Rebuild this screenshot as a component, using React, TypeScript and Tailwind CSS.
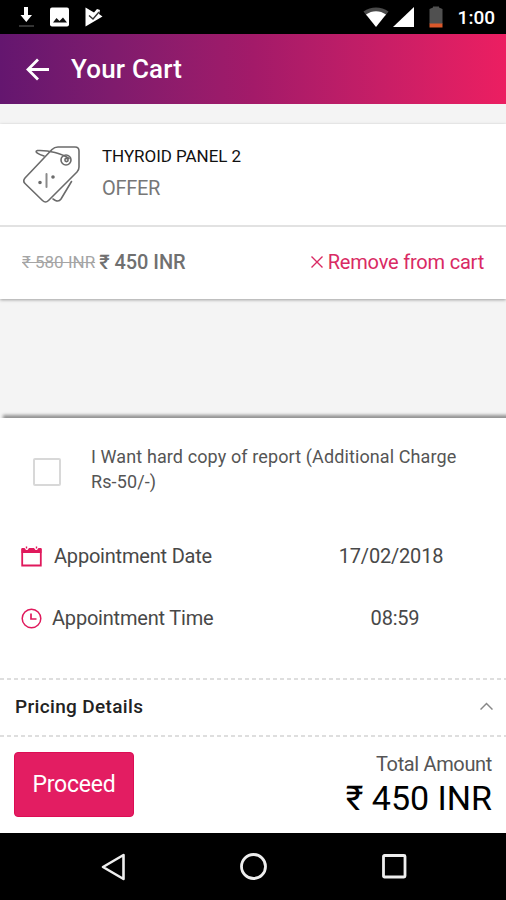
import { ReactNode } from "react";

type AppointmentRowProps = {
  icon: ReactNode;
  label: string;
  labelClass: string;
  value: string;
  valueClass: string;
};

function StatusBar() {
  return (
    <div className="flex h-[34px] shrink-0 items-center justify-between bg-black pr-[11px] pl-[18px] text-white">
      <div className="flex items-center gap-[15px]">
        <svg width="17" height="24" viewBox="0 0 17 24">
          <path d="M6 2h4v8h4l-5.700 7L2.500 10H6z" fill="#fff" />
          <path d="M1 20h15v2H1z" fill="#333" />
        </svg>
        <svg width="20" height="20" viewBox="0 0 20 20">
          <rect x="0" y="0.500" width="19" height="19" rx="2" fill="#fff" />
          <path d="M3 15.500l3.500-4.500 3 3 3.500-3.500 4 5z" fill="#111" />
        </svg>
        <svg width="20" height="20" viewBox="0 0 20 20">
          <path d="M0.500 0.500L9 5.500l3-3.500 3 1-1 4 3.500 2.500L0.500 19.500z" fill="#fff" />
          <path d="M4 8.500l4 3.500 6-7" fill="none" stroke="#333" strokeWidth="1.400" />
        </svg>
      </div>
      <div className="flex items-center">
        <svg width="26" height="22" viewBox="0 0 26 22">
          <path d="M0.500 5.500C8 0 18 0 25.500 5.500L22.500 9.500H3.500z" fill="#4a4a4a" />
          <path d="M3 8.500C9 4 17 4 23 8.500L13 21z" fill="#fff" />
        </svg>
        <svg className="ml-1" width="22" height="22" viewBox="0 0 22 22">
          <path d="M21 1v20H0z" fill="#fff" />
        </svg>
        <svg className="ml-[14px]" width="14" height="22" viewBox="0 0 14 22">
          <path d="M0.500 3L4 1.500V0.500h6v1L13.500 3v15h-13z" fill="#505050" />
          <path d="M0.500 17.500h13V21.500h-13z" fill="#d9582b" />
        </svg>
        <span className="mt-[2px] ml-[15px] text-[19px] leading-6 font-medium">1:00</span>
      </div>
    </div>
  );
}

function Header() {
  return (
    <header className="flex h-[70px] shrink-0 items-center bg-linear-to-r from-[#64166f] via-[#a31a69] to-[#ec1e61] pl-[25px] text-white">
      <svg width="25" height="24" viewBox="0 0 25 24" fill="none" stroke="#fff" strokeWidth="2.800">
        <path d="M24 12.500H3M13 2.500l-10 10 10 10" />
      </svg>
      <h1 className="ml-[21px] text-[26px] leading-8 font-medium tracking-[0.2px]">Your Cart</h1>
    </header>
  );
}

function TagIcon() {
  return (
    <svg width="60" height="60" viewBox="0 0 60 60" fill="none" stroke="#6b6b6b" strokeWidth="1.600" strokeLinejoin="round" strokeLinecap="round">
      <path d="M30 4.500Q32.500 2 36 2h17q4 0 4 4v16q0 3-2 5L26.500 55.500q-3 3-6 0L3 38.500q-2.500-2.500 0-5.500z" />
      <circle cx="44" cy="15" r="5" />
      <circle cx="44.500" cy="15" r="1.600" />
      <path d="M47 13.500C40 8.500 27 5 15.500 5.500c-4 1 1.500 4 6.500 5.500" />
      <path d="M49.500 36.500L39 54q-2 3-5.500 1.500L31 54" />
      <path d="M24.500 29v13" stroke="#8a8a8a" strokeWidth="2" />
      <circle cx="18" cy="37.500" r="1" fill="#6b6b6b" />
      <circle cx="31" cy="32" r="1" fill="#6b6b6b" />
    </svg>
  );
}

function CartItem() {
  return (
    <section className="mt-5 shrink-0 bg-white shadow-[0_1px_3px_rgba(0,0,0,0.35)]">
      <div className="flex h-[103px] items-start border-b-2 border-[#e2e2e2] pt-[21px] pl-[22px]">
        <TagIcon />
        <div className="-mt-px ml-5">
          <h2 className="text-[17px] leading-6 tracking-[-0.05px] text-[#111]">THYROID PANEL 2</h2>
          <p className="mt-[6px] text-[20px] leading-7 tracking-[-0.3px] text-[#777]">OFFER</p>
        </div>
      </div>
      <div className="flex h-[72px] items-center justify-between pr-[22px] pb-[2px] pl-[22px]">
        <div className="flex items-center gap-1">
          <span className="pt-px text-[17px] text-[#a5a5a5] line-through">₹ 580 INR</span>
          <span className="text-[20px] font-medium tracking-[-0.05px] text-[#707070]">₹ 450 INR</span>
        </div>
        <button type="button" className="flex items-center gap-[5px] text-[20px] tracking-[-0.2px] text-[#d92a64]">
          <svg width="12" height="12" viewBox="0 0 12 12" stroke="#d92a64" strokeWidth="1.400">
            <path d="M0.500 0.500l11 11M11.500 0.500l-11 11" />
          </svg>
          <span>Remove from cart</span>
        </button>
      </div>
    </section>
  );
}

function CalendarIcon() {
  return (
    <svg width="21" height="21" viewBox="0 0 21 21" fill="none" stroke="#e0195c">
      <path d="M1.200 3v16.500h18.600V3" strokeWidth="1.800" />
      <path d="M0.500 2h3l1.500 2h1.500l1.500-2h5l1.500 2h1.500l1.500-2h3v5h-20z" fill="#e0195c" stroke="none" />
      <path d="M5.500 0.500v2M15.500 0.500v2" strokeWidth="1.400" />
    </svg>
  );
}

function ClockIcon() {
  return (
    <svg width="21" height="21" viewBox="0 0 21 21" fill="none" stroke="#e0195c">
      <circle cx="10.500" cy="10.500" r="9.300" strokeWidth="1.500" />
      <path d="M10 5.500v5.500h5.500" strokeWidth="1.700" />
    </svg>
  );
}

function AppointmentRow({ icon, label, labelClass, value, valueClass }: AppointmentRowProps) {
  return (
    <div className="flex h-[62px] items-center pl-[21px] text-[20px] tracking-[-0.2px] text-[#484848]">
      {icon}
      <span className={labelClass}>{label}</span>
      <span className={valueClass}>{value}</span>
    </div>
  );
}

function DashedRule() {
  return (
    <div className="h-[2px] shrink-0 bg-[repeating-linear-gradient(90deg,#dedede_0,#dedede_4px,#fff_4px,#fff_7px)]" />
  );
}

function NavigationBar() {
  return (
    <nav className="flex h-[67px] shrink-0 items-center bg-black pl-[101px]">
      <svg width="26" height="28" viewBox="0 0 26 28" fill="none" stroke="#eee" strokeWidth="2.600" strokeLinejoin="round">
        <path d="M22.500 2v24L2 14z" />
      </svg>
      <svg className="ml-[112px]" width="29" height="29" viewBox="0 0 29 29" fill="none" stroke="#eee" strokeWidth="2.800">
        <circle cx="14.500" cy="14.500" r="12" />
      </svg>
      <svg className="ml-[114px]" width="25" height="25" viewBox="0 0 25 25" fill="none" stroke="#eee" strokeWidth="2.800">
        <rect x="1.500" y="1.500" width="21.500" height="21.500" rx="1" />
      </svg>
    </nav>
  );
}

export default function App() {
  return (
    <div className="flex h-[900px] w-[506px] flex-col overflow-hidden bg-[#f4f4f4] font-['Roboto',sans-serif]">
      <StatusBar />
      <Header />
      <CartItem />
      <main className="mt-auto flex h-[415px] shrink-0 flex-col bg-white shadow-[3px_-3px_3px_rgba(0,0,0,0.4)]">
        <label className="flex h-[107px] items-start pt-[26px] pl-[33px]">
          <span className="mt-[14px] size-7 shrink-0 rounded-xs border-2 border-[#d8d8d8]" />
          <span className="ml-[30px] w-[385px] text-[18px] leading-[25px] tracking-[0.11px] text-[#555]">
            I Want hard copy of report (Additional Charge Rs-50/-)
          </span>
        </label>
        <AppointmentRow
          icon={<CalendarIcon />}
          label="Appointment Date"
          labelClass="ml-3"
          value="17/02/2018"
          valueClass="mr-[26px] ml-auto w-[178px] text-center"
        />
        <AppointmentRow
          icon={<ClockIcon />}
          label="Appointment Time"
          labelClass="ml-[10px]"
          value="08:59"
          valueClass="mr-[22px] ml-auto w-[178px] text-center"
        />
        <div className="mt-[29px] flex h-[59px] flex-col justify-between">
          <DashedRule />
          <div className="-mt-px flex items-center justify-between pr-[13px] pl-[15px]">
            <h3 className="text-[19px] leading-7 font-medium tracking-[0.35px] text-[#222]">Pricing Details</h3>
            <svg className="-mt-[2px]" width="13" height="8" viewBox="0 0 13 8" fill="none" stroke="#888" strokeWidth="1.500">
              <path d="M0.500 7.500l6-6 6 6" />
            </svg>
          </div>
          <DashedRule />
        </div>
        <div className="flex items-start justify-between pt-[15px] pr-[14px] pl-[14px]">
          <button type="button" className="h-[65px] w-[120px] rounded-[4px] border border-[#dc0d54] bg-[#e31d62] pt-[2px] text-[23px] tracking-[-0.2px] text-white">
            Proceed
          </button>
          <div className="text-right">
            <p className="text-[20px] leading-6 tracking-[-0.35px] text-[#555]">Total Amount</p>
            <p className="mt-[2px] text-[34px] leading-10 text-black">₹ 450 INR</p>
          </div>
        </div>
      </main>
      <NavigationBar />
    </div>
  );
}
